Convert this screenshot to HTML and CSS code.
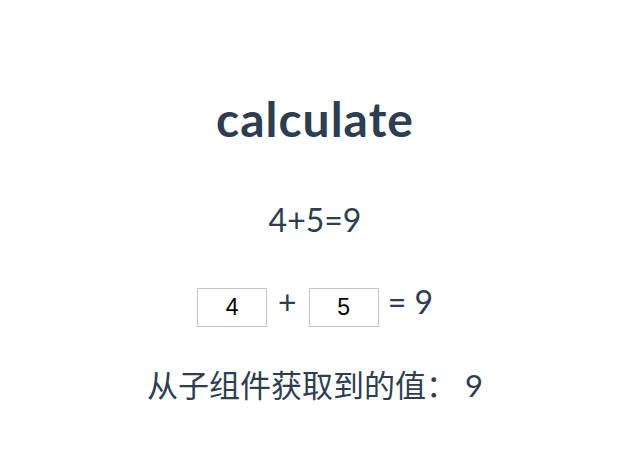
FILE: index.html
```html
<!DOCTYPE html>
<html lang="zh">
<head>
<meta charset="utf-8">
<link rel="stylesheet" href="styles.css">
</head>
<body>
<div class="app">
  <h1 class="title">calculate</h1>
  <p class="expr">4+5=9</p>
  <div class="row">
    <input class="num" type="text" value="4">
    <span class="op op-plus">+</span>
    <input class="num" type="text" value="5">
    <span class="op op-eq">= 9</span>
  </div>
  <p class="result">从子组件获取到的值：&nbsp;9</p>
</div>
</body>
</html>
```
FILE: styles.css
```css
html, body {
  margin: 0;
  padding: 0;
  background: #ffffff;
}
.app {
  font-family: Lato, "Noto Sans CJK SC", sans-serif;
  color: #2c3e50;
  text-align: center;
  display: flex;
  flex-direction: column;
  align-items: center;
  padding-top: 89px;
  padding-left: 8px;
}
.title {
  margin: 0;
  font-size: 48px;
  font-weight: 700;
  letter-spacing: 1px;
  line-height: 60px;
}
.expr {
  margin: 51px 0 0;
  font-size: 32px;
  font-weight: 400;
  line-height: 40px;
}
.row {
  margin-top: 47px;
  display: flex;
  align-items: center;
  font-size: 32px;
}
.num {
  box-sizing: border-box;
  width: 70px;
  height: 39px;
  border: 1px solid #c4c4c4;
  padding: 0;
  margin: 0;
  text-align: center;
  font-family: "Liberation Sans", Arial, sans-serif;
  font-size: 23px;
  color: #000;
  background: #fff;
}
.op {
  line-height: 30px;
  padding-bottom: 11px;
}
.op-plus {
  margin: 0 12px 0 11px;
}
.op-eq {
  margin-left: 9px;
}
.result {
  margin: 35px 0 0;
  font-size: 31px;
  line-height: 44px;
}
```
